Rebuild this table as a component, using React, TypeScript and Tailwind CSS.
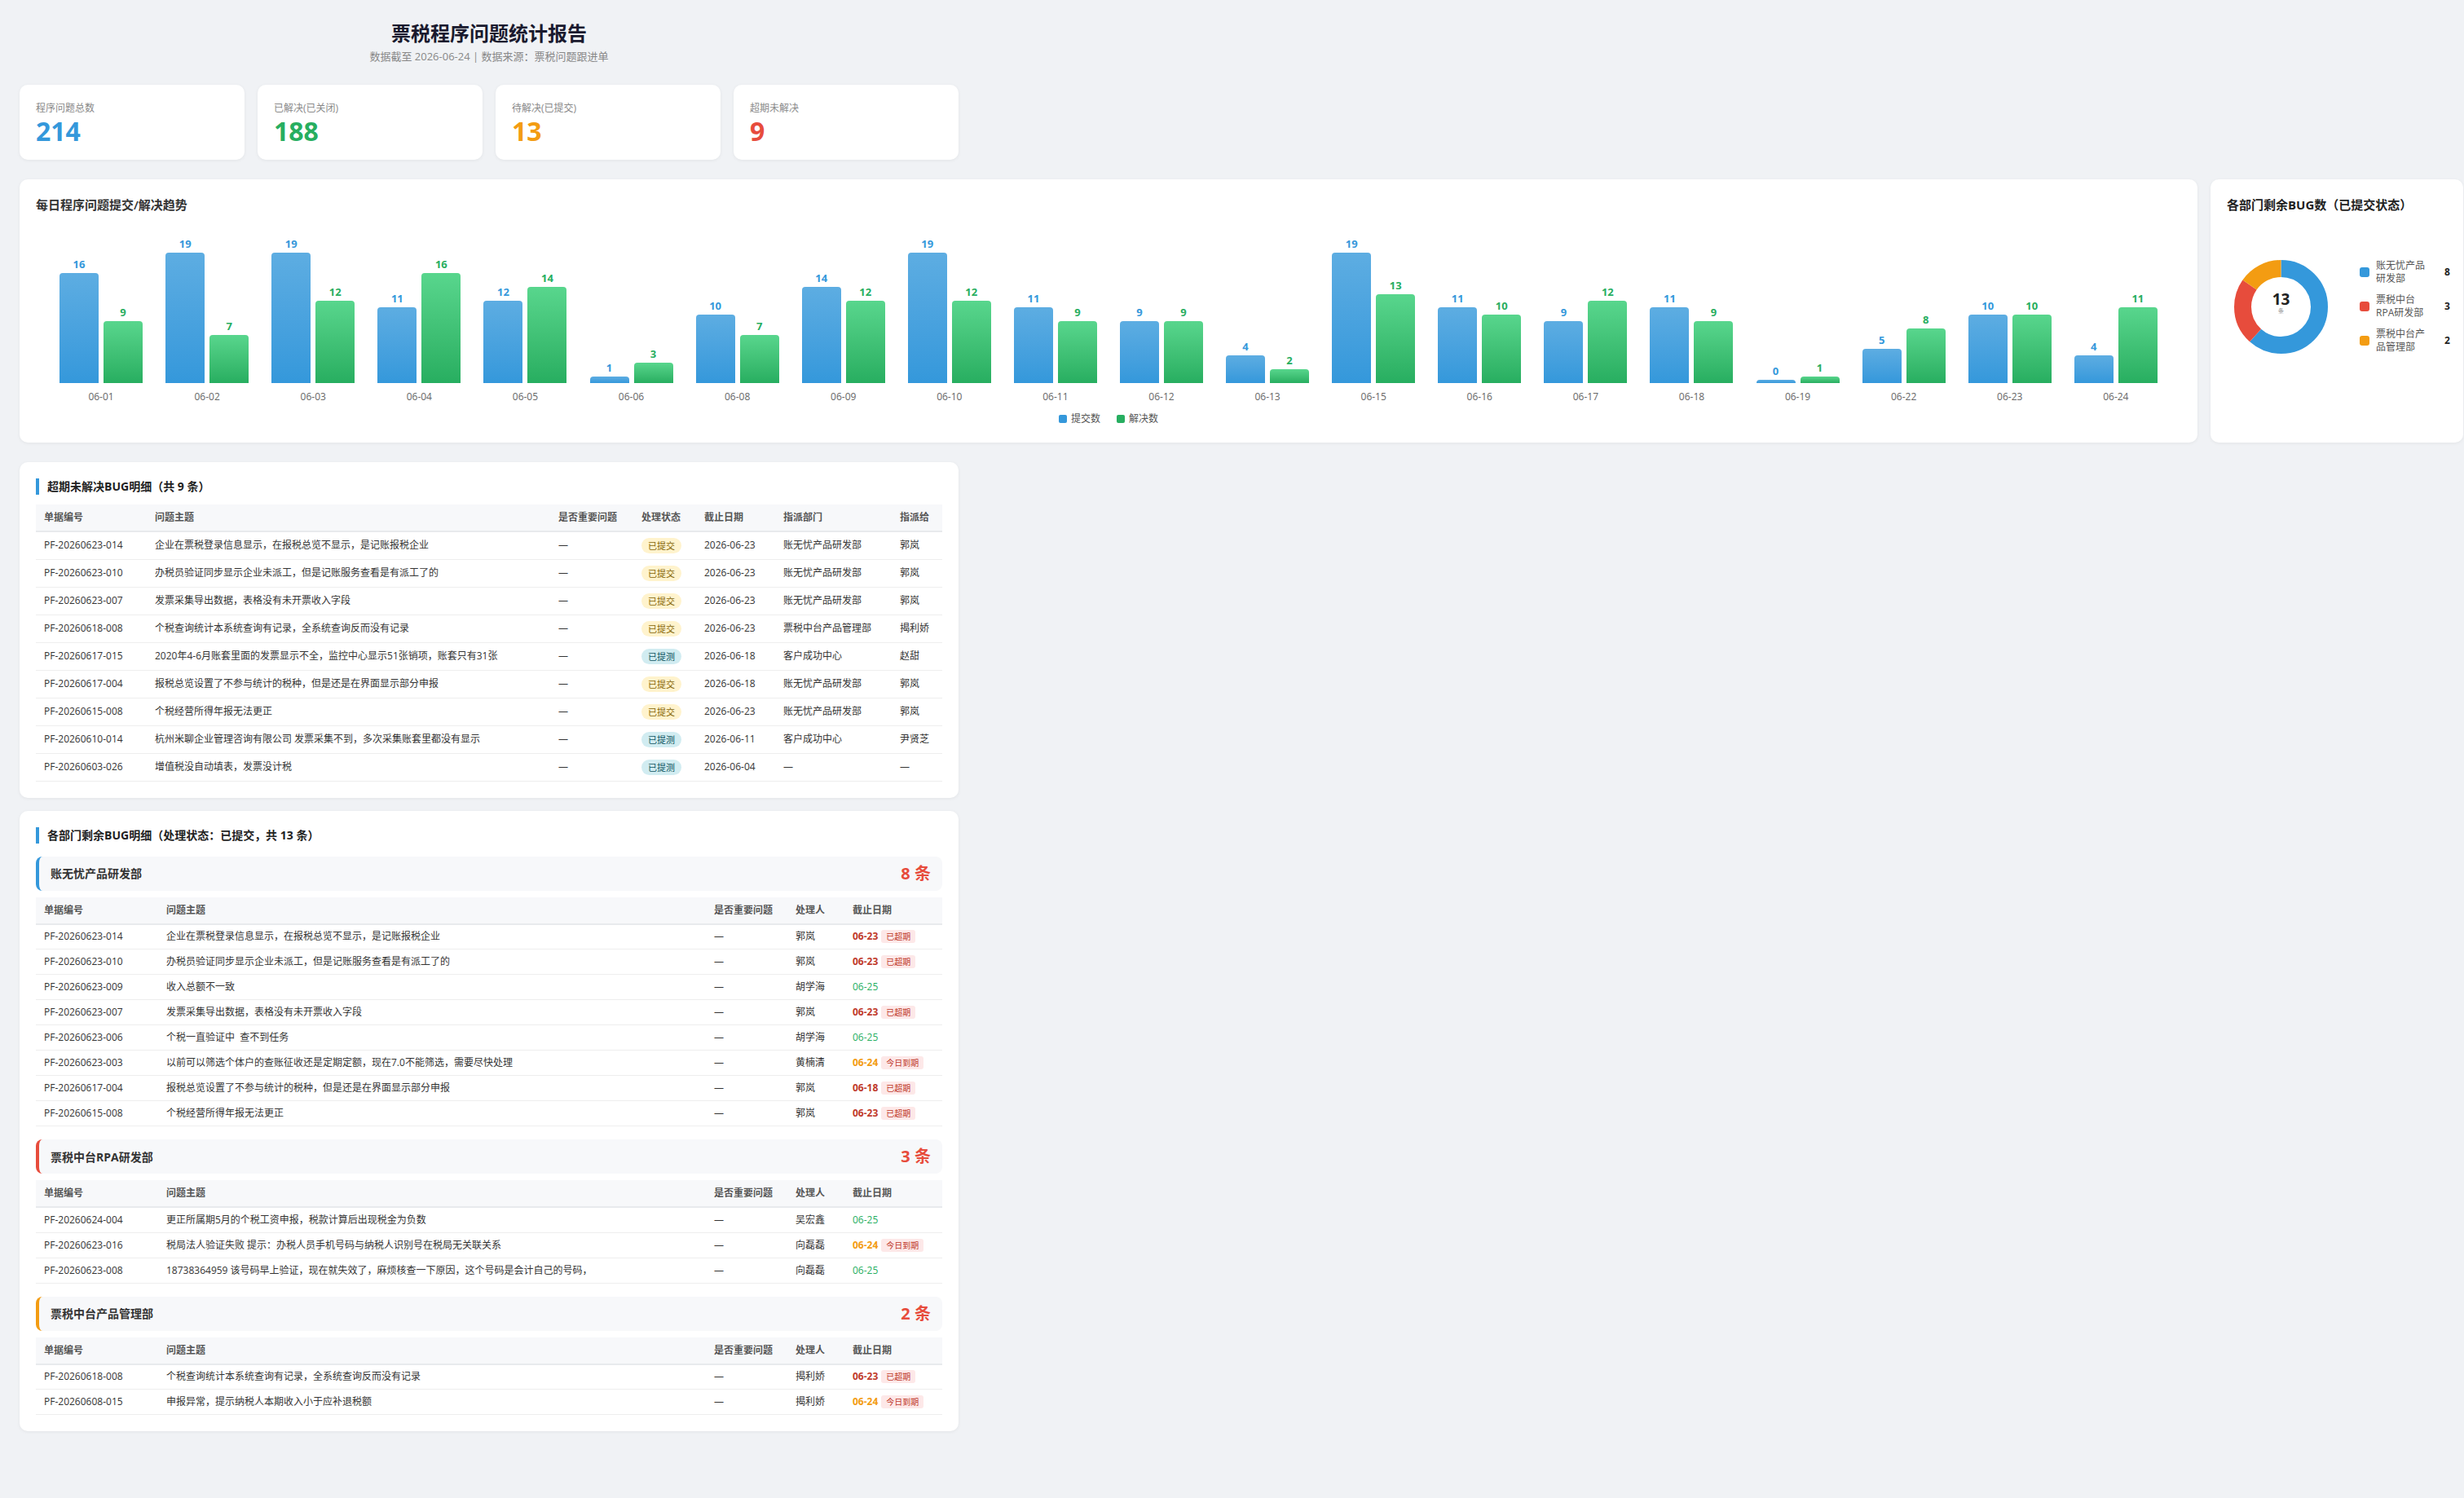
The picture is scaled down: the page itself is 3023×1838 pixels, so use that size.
import React from "react";

const daily: [string, number, number][] = [
  ["06-01", 16, 9],
  ["06-02", 19, 7],
  ["06-03", 19, 12],
  ["06-04", 11, 16],
  ["06-05", 12, 14],
  ["06-06", 1, 3],
  ["06-08", 10, 7],
  ["06-09", 14, 12],
  ["06-10", 19, 12],
  ["06-11", 11, 9],
  ["06-12", 9, 9],
  ["06-13", 4, 2],
  ["06-15", 19, 13],
  ["06-16", 11, 10],
  ["06-17", 9, 12],
  ["06-18", 11, 9],
  ["06-19", 0, 1],
  ["06-22", 5, 8],
  ["06-23", 10, 10],
  ["06-24", 4, 11],
];

type OverdueRow = [string, string, string, string, string, string];
const overdue: OverdueRow[] = [
  ["PF-20260623-014", "企业在票税登录信息显示，在报税总览不显示，是记账报税企业", "已提交", "2026-06-23", "账无忧产品研发部", "郭岚"],
  ["PF-20260623-010", "办税员验证同步显示企业未派工，但是记账服务查看是有派工了的", "已提交", "2026-06-23", "账无忧产品研发部", "郭岚"],
  ["PF-20260623-007", "发票采集导出数据，表格没有未开票收入字段", "已提交", "2026-06-23", "账无忧产品研发部", "郭岚"],
  ["PF-20260618-008", "个税查询统计本系统查询有记录，全系统查询反而没有记录", "已提交", "2026-06-23", "票税中台产品管理部", "揭利娇"],
  ["PF-20260617-015", "2020年4-6月账套里面的发票显示不全，监控中心显示51张销项，账套只有31张", "已提测", "2026-06-18", "客户成功中心", "赵甜"],
  ["PF-20260617-004", "报税总览设置了不参与统计的税种，但是还是在界面显示部分申报", "已提交", "2026-06-18", "账无忧产品研发部", "郭岚"],
  ["PF-20260615-008", "个税经营所得年报无法更正", "已提交", "2026-06-23", "账无忧产品研发部", "郭岚"],
  ["PF-20260610-014", "杭州米聊企业管理咨询有限公司 发票采集不到，多次采集账套里都没有显示", "已提测", "2026-06-11", "客户成功中心", "尹贤芝"],
  ["PF-20260603-026", "增值税没自动填表，发票没计税", "已提测", "2026-06-04", "—", "—"],
];

type DeptRow = [string, string, string, string, "over" | "ok" | "today"];
type Dept = { name: string; border: string; count: number; rows: DeptRow[] };
const depts: Dept[] = [
  {
    name: "账无忧产品研发部",
    border: "border-[#3498db]",
    count: 8,
    rows: [
      ["PF-20260623-014", "企业在票税登录信息显示，在报税总览不显示，是记账报税企业", "郭岚", "06-23", "over"],
      ["PF-20260623-010", "办税员验证同步显示企业未派工，但是记账服务查看是有派工了的", "郭岚", "06-23", "over"],
      ["PF-20260623-009", "收入总额不一致", "胡学海", "06-25", "ok"],
      ["PF-20260623-007", "发票采集导出数据，表格没有未开票收入字段", "郭岚", "06-23", "over"],
      ["PF-20260623-006", "个税一直验证中  查不到任务", "胡学海", "06-25", "ok"],
      ["PF-20260623-003", "以前可以筛选个体户的查账征收还是定期定额，现在7.0不能筛选，需要尽快处理", "黄楠清", "06-24", "today"],
      ["PF-20260617-004", "报税总览设置了不参与统计的税种，但是还是在界面显示部分申报", "郭岚", "06-18", "over"],
      ["PF-20260615-008", "个税经营所得年报无法更正", "郭岚", "06-23", "over"],
    ],
  },
  {
    name: "票税中台RPA研发部",
    border: "border-[#e74c3c]",
    count: 3,
    rows: [
      ["PF-20260624-004", "更正所属期5月的个税工资申报，税款计算后出现税金为负数", "吴宏鑫", "06-25", "ok"],
      ["PF-20260623-016", "税局法人验证失败 提示：办税人员手机号码与纳税人识别号在税局无关联关系", "向磊磊", "06-24", "today"],
      ["PF-20260623-008", "18738364959 该号码早上验证，现在就失效了，麻烦核查一下原因，这个号码是会计自己的号码，", "向磊磊", "06-25", "ok"],
    ],
  },
  {
    name: "票税中台产品管理部",
    border: "border-[#f39c12]",
    count: 2,
    rows: [
      ["PF-20260618-008", "个税查询统计本系统查询有记录，全系统查询反而没有记录", "揭利娇", "06-23", "over"],
      ["PF-20260608-015", "申报异常，提示纳税人本期收入小于应补退税额", "揭利娇", "06-24", "today"],
    ],
  },
];

const card = "rounded-[10px] bg-white shadow-[0_1px_4px_rgba(0,0,0,0.06)]";

function StatCard({ label, value, color }: { label: string; value: string; color: string }) {
  return (
    <div className={`${card} h-[92px] px-5 pt-5`}>
      <div className="text-[12px] leading-[18px] text-[#888]">{label}</div>
      <div className={`mt-[1px] text-[32px] font-bold leading-[36px] ${color}`}>{value}</div>
    </div>
  );
}

function Bar({ v, kind }: { v: number; kind: "blue" | "green" }) {
  const h = Math.max(4, (v / 19) * 160);
  return (
    <div className="flex w-[48px] flex-col items-center">
      <span
        className={`mb-[3px] text-[13px] font-bold leading-4 ${
          kind === "blue" ? "text-[#3498db]" : "text-[#27ae60]"
        }`}
      >
        {v}
      </span>
      <div
        className={`w-full rounded-t-[4px] ${
          kind === "blue"
            ? "bg-linear-to-b from-[#5dade2] to-[#3498db]"
            : "bg-linear-to-b from-[#58d68d] to-[#27ae60]"
        }`}
        style={{ height: h }}
      />
    </div>
  );
}

function TrendCard() {
  return (
    <div className={`${card} w-[2672px] px-5 pb-5 pt-5`}>
      <div className="text-[15px] font-semibold leading-[22px] text-[#333]">每日程序问题提交/解决趋势</div>
      <div className="mt-[28px] flex px-[15px]">
        {daily.map(([d, s, r]) => (
          <div key={d} className="flex flex-1 flex-col items-center">
            <div className="flex h-[180px] items-end gap-[6px]">
              <Bar v={s} kind="blue" />
              <Bar v={r} kind="green" />
            </div>
            <div className="mt-2 text-[12px] leading-[18px] text-[#666]">{d}</div>
          </div>
        ))}
      </div>
      <div className="mt-[9px] flex items-center justify-center gap-5 text-[12px] leading-[18px] text-[#555]">
        <div className="flex items-center gap-[5px]">
          <span className="inline-block h-[10px] w-[10px] rounded-[2px] bg-[#3498db]" />
          提交数
        </div>
        <div className="flex items-center gap-[5px]">
          <span className="inline-block h-[10px] w-[10px] rounded-[2px] bg-[#27ae60]" />
          解决数
        </div>
      </div>
    </div>
  );
}

function PieCard() {
  const r = 47;
  const c = 2 * Math.PI * r;
  const segs = [
    { v: 8, color: "#3498db" },
    { v: 3, color: "#e74c3c" },
    { v: 2, color: "#f39c12" },
  ];
  let acc = 0;
  const legend = [
    { name: "账无忧产品研发部", v: 8, color: "bg-[#3498db]" },
    { name: "票税中台RPA研发部", v: 3, color: "bg-[#e74c3c]" },
    { name: "票税中台产品管理部", v: 2, color: "bg-[#f39c12]" },
  ];
  return (
    <div className={`${card} w-[310px] px-5 pt-5`}>
      <div className="text-[15px] font-bold leading-[22px] text-[#222]">各部门剩余BUG数（已提交状态）</div>
      <div className="ml-[9px] mt-[56px] flex items-center gap-[39px]">
        <div className="relative h-[115px] w-[115px] shrink-0">
          <svg width="115" height="115" viewBox="0 0 115 115">
            <g transform="rotate(-90 57.5 57.5)">
              {segs.map((s) => {
                const len = (s.v / 13) * c;
                const el = (
                  <circle
                    key={s.color}
                    cx="57.5"
                    cy="57.5"
                    r={r}
                    fill="none"
                    stroke={s.color}
                    strokeWidth="21"
                    strokeDasharray={`${len} ${c}`}
                    strokeDashoffset={-acc}
                  />
                );
                acc += len;
                return el;
              })}
            </g>
          </svg>
          <div className="absolute inset-0 flex flex-col items-center justify-center pb-[8px]">
            <div className="text-[19px] font-bold leading-5 text-[#222]">13</div>
            <div className="text-[7px] leading-[10px] text-[#999]">条</div>
          </div>
        </div>
        <div className="flex flex-col gap-[10px]">
          {legend.map((l) => (
            <div key={l.name} className="flex items-center">
              <span className={`inline-block h-[12px] w-[12px] shrink-0 rounded-[3px] ${l.color}`} />
              <span className="ml-2 w-[64px] text-[12px] leading-4 text-[#555]">{l.name}</span>
              <span className="ml-[20px] text-[12px] font-bold leading-4 text-[#222]">{l.v}</span>
            </div>
          ))}
        </div>
      </div>
    </div>
  );
}

function SectionTitle({ children }: { children: React.ReactNode }) {
  return (
    <div className="border-l-4 border-[#3498db] pl-[10px] text-[14px] font-bold leading-5 text-[#222]">
      {children}
    </div>
  );
}

const th = "h-[33px] border-b-2 border-[#e8eaed] bg-[#f7f8fa] px-[10px] text-left text-[12px] font-semibold text-[#555]";

function StatusBadge({ s }: { s: string }) {
  const cls = s === "已提交" ? "bg-[#fff3cd] text-[#856404]" : "bg-[#d1ecf1] text-[#0c5460]";
  return <span className={`inline-block rounded-full px-2 text-[11px] leading-[19px] ${cls}`}>{s}</span>;
}

function OverdueCard() {
  const td = "h-[34px] border-b border-[#eeeeee] px-[10px] text-[12px] text-[#333]";
  return (
    <div className={`${card} w-[1152px] p-5`}>
      <SectionTitle>超期未解决BUG明细（共 9 条）</SectionTitle>
      <table className="mt-3 w-full table-fixed border-collapse">
        <colgroup>
          <col className="w-[136px]" />
          <col className="w-[495px]" />
          <col className="w-[102px]" />
          <col className="w-[77px]" />
          <col className="w-[97px]" />
          <col className="w-[143px]" />
          <col className="w-[62px]" />
        </colgroup>
        <thead>
          <tr>
            <th className={th}>单据编号</th>
            <th className={th}>问题主题</th>
            <th className={th}>是否重要问题</th>
            <th className={th}>处理状态</th>
            <th className={th}>截止日期</th>
            <th className={th}>指派部门</th>
            <th className={th}>指派给</th>
          </tr>
        </thead>
        <tbody>
          {overdue.map((r, i) => (
            <tr key={i}>
              <td className={td}>{r[0]}</td>
              <td className={`${td} whitespace-pre`}>{r[1]}</td>
              <td className={td}>—</td>
              <td className={td}>
                <StatusBadge s={r[2]} />
              </td>
              <td className={td}>{r[3]}</td>
              <td className={td}>{r[4]}</td>
              <td className={td}>{r[5]}</td>
            </tr>
          ))}
        </tbody>
      </table>
    </div>
  );
}

function Deadline({ d, k }: { d: string; k: "over" | "ok" | "today" }) {
  if (k === "ok") return <span className="text-[#27ae60]">{d}</span>;
  return (
    <span className="inline-flex items-center">
      <span className={`font-bold ${k === "over" ? "text-[#c0392b]" : "text-[#f39c12]"}`}>{d}</span>
      <span className="ml-1 inline-block rounded-[3px] bg-[#fde8e8] px-[6px] text-[10px] leading-4 text-[#c0392b]">
        {k === "over" ? "已超期" : "今日到期"}
      </span>
    </span>
  );
}

function DeptCard() {
  const td = "h-[31px] border-b border-[#eeeeee] px-[10px] text-[12px] text-[#333]";
  return (
    <div className={`${card} w-[1152px] p-5`}>
      <SectionTitle>各部门剩余BUG明细（处理状态：已提交，共 13 条）</SectionTitle>
      <div className="mt-4 flex flex-col gap-4">
        {depts.map((dp) => (
          <div key={dp.name}>
            <div
              className={`flex h-[42px] items-center justify-between rounded-[8px] border-l-4 ${dp.border} bg-[#f7f8fa] pl-[14px] pr-[14px]`}
            >
              <span className="text-[14px] font-bold text-[#333]">{dp.name}</span>
              <span className="text-[20px] font-bold text-[#e74c3c]">{dp.count} 条</span>
            </div>
            <table className="mt-2 w-full table-fixed border-collapse">
              <colgroup>
                <col className="w-[150px]" />
                <col className="w-[672px]" />
                <col className="w-[100px]" />
                <col className="w-[70px]" />
                <col className="w-[120px]" />
              </colgroup>
              <thead>
                <tr>
                  <th className={th}>单据编号</th>
                  <th className={th}>问题主题</th>
                  <th className={th}>是否重要问题</th>
                  <th className={th}>处理人</th>
                  <th className={th}>截止日期</th>
                </tr>
              </thead>
              <tbody>
                {dp.rows.map((r, i) => (
                  <tr key={i}>
                    <td className={td}>{r[0]}</td>
                    <td className={`${td} whitespace-pre`}>{r[1]}</td>
                    <td className={td}>—</td>
                    <td className={td}>{r[2]}</td>
                    <td className={td}>
                      <Deadline d={r[3]} k={r[4]} />
                    </td>
                  </tr>
                ))}
              </tbody>
            </table>
          </div>
        ))}
      </div>
    </div>
  );
}

export default function App() {
  return (
    <div className="min-h-screen bg-[#f0f2f5] pb-6 pl-6 pt-6 font-['Open_Sans','Noto_Sans_CJK_SC',sans-serif] text-[#333]">
      <div className="w-[1152px] text-center">
        <h1 className="text-[24px] font-bold leading-[34px] text-[#1a1a2e]">票税程序问题统计报告</h1>
        <div className="mt-[1px] text-[13px] leading-5 text-[#888]">数据截至 2026-06-24 | 数据来源：票税问题跟进单</div>
      </div>
      <div className="mt-[25px] grid w-[1152px] grid-cols-4 gap-4">
        <StatCard label="程序问题总数" value="214" color="text-[#3498db]" />
        <StatCard label="已解决(已关闭)" value="188" color="text-[#27ae60]" />
        <StatCard label="待解决(已提交)" value="13" color="text-[#f39c12]" />
        <StatCard label="超期未解决" value="9" color="text-[#e74c3c]" />
      </div>
      <div className="mt-6 flex items-stretch gap-4">
        <TrendCard />
        <PieCard />
      </div>
      <div className="mt-6">
        <OverdueCard />
      </div>
      <div className="mt-4">
        <DeptCard />
      </div>
    </div>
  );
}
